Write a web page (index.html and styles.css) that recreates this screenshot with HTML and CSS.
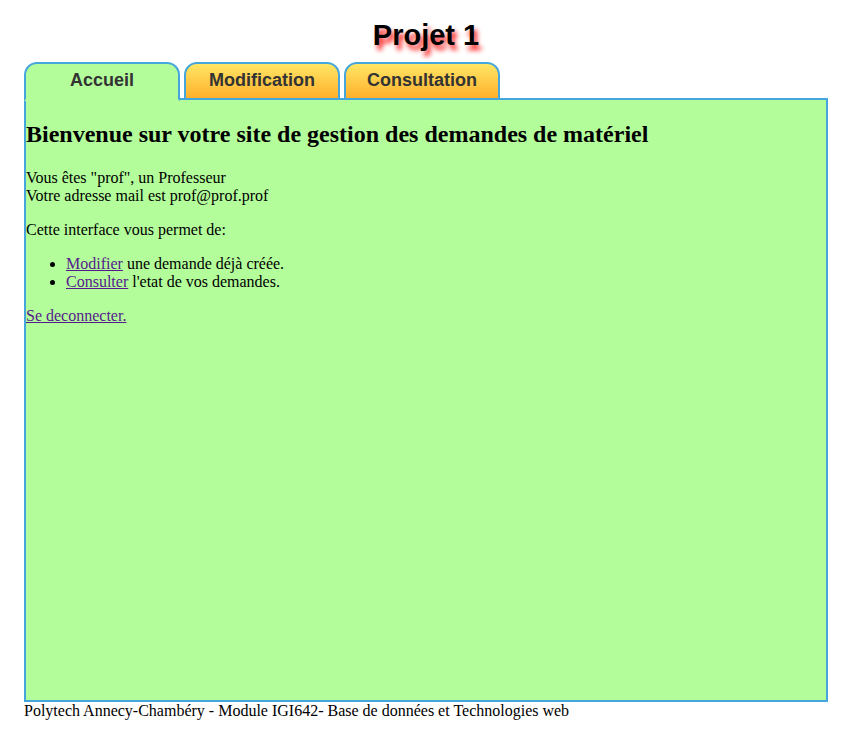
FILE: index.html
```
<!DOCTYPE html>
<html lang="fr">
<head>
<meta charset="utf-8">
<title>Projet 1</title>
<link rel="stylesheet" href="styles.css">
</head>
<body>
<div class="page">
  <h1 class="title">Projet 1</h1>
  <ul class="tabs">
    <li class="tab active">Accueil</li>
    <li class="tab">Modification</li>
    <li class="tab">Consultation</li>
  </ul>
  <div class="panel">
    <h2>Bienvenue sur votre site de gestion des demandes de matériel</h2>
    <p>Vous êtes "prof", un Professeur<br>Votre adresse mail est prof@prof.prof</p>
    <p>Cette interface vous permet de:</p>
    <ul class="list">
      <li><a href="#">Modifier</a> une demande déjà créée.</li>
      <li><a href="#">Consulter</a> l'etat de vos demandes.</li>
    </ul>
    <a href="#">Se deconnecter.</a>
  </div>
  <div class="footer">Polytech Annecy-Chambéry - Module IGI642- Base de données et Technologies web</div>
</div>
</body>
</html>
```
FILE: styles.css
```
body {
  margin: 8px;
  font-family: "Liberation Serif", "Times New Roman", serif;
  font-size: 16px;
  background: #fff;
}
.page {
  width: 804px;
  margin-left: 16px;
}
.title {
  font-family: "Liberation Sans", Arial, sans-serif;
  font-size: 29px;
  font-weight: bold;
  text-align: center;
  margin: 11px 0 0 0;
  line-height: 33px;
  color: #000;
  text-shadow: 3px 5px 5px #ff1a1a;
}
.tabs {
  list-style: none;
  display: flex;
  gap: 4px;
  margin: 10px 0 0 0;
  padding: 0;
  position: relative;
  z-index: 1;
}
.tab {
  width: 152px;
  height: 34px;
  line-height: 32px;
  border: 2px solid #45a6dc;
  border-radius: 13px 13px 0 0;
  background: linear-gradient(#ffe665, #ffb02c);
  font-family: "Liberation Sans", Arial, sans-serif;
  font-weight: bold;
  font-size: 18px;
  color: #333;
  text-align: center;
}
.tab.active {
  background: #b4fd9b;
  border-bottom-color: #b4fd9b;
  height: 35px;
  margin-bottom: -3px;
  line-height: 32px;
}
.panel {
  border: 2px solid #45a6dc;
  background: #b4fd9b;
  height: 599px;
  padding-top: 1px;
  margin-top: -2px;
  color: #000;
}
.panel h2 {
  font-size: 24px;
  margin: 20px 0 21px 0;
}
.panel p {
  margin: 16px 0;
}
.list {
  margin: 16px 0;
  padding-left: 40px;
}
a {
  color: #551a8b;
}
.footer {
  line-height: 18px;
}
```
